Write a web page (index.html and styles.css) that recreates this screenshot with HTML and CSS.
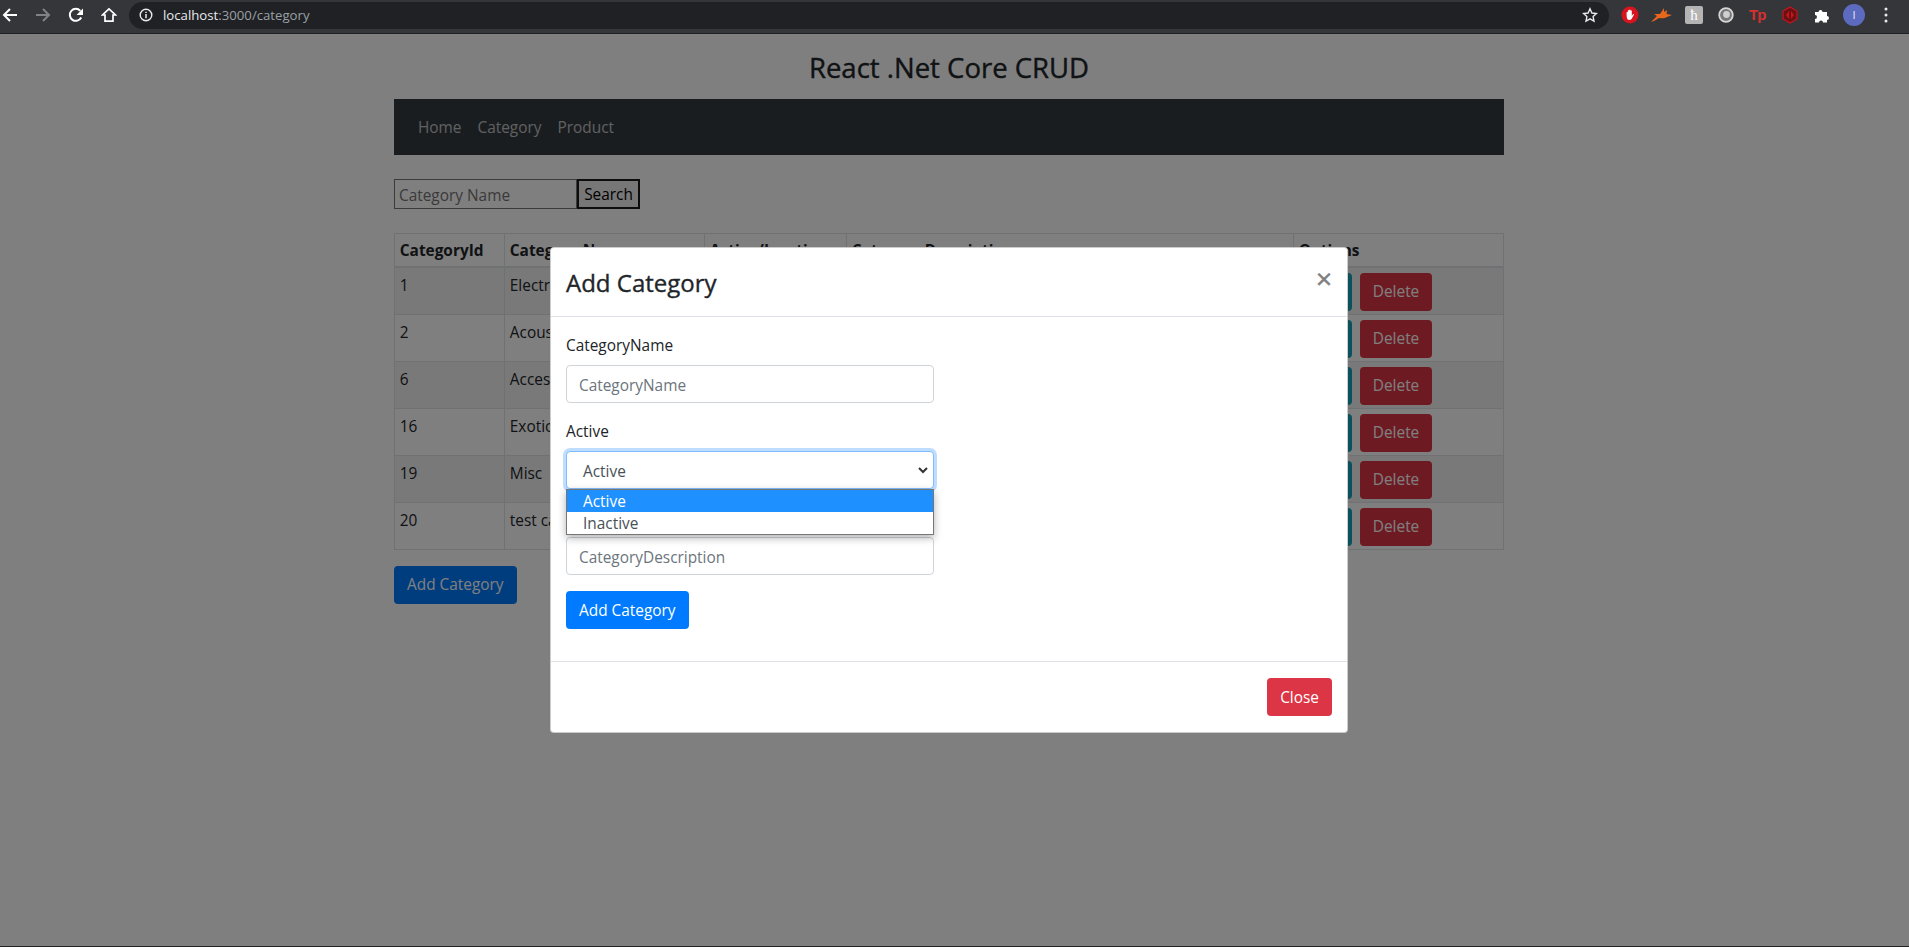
FILE: index.html
```html
<!DOCTYPE html>
<html lang="en">
<head>
    <meta charset="UTF-8">
    <title>React .Net Core CRUD</title>
    <link rel="stylesheet" href="styles.css">
</head>
<body>
    <!-- browser toolbar -->
    <div class="toolbar">
        <svg class="tool-icon" width="16" height="16" viewBox="0 0 16 16"><path d="M15 8H2M8 2L2 8l6 6" fill="none" stroke="#fff" stroke-width="2"/></svg>
        <svg class="tool-icon" width="16" height="16" viewBox="0 0 16 16"><path d="M1 8h13M8 2l6 6-6 6" fill="none" stroke="#808285" stroke-width="2"/></svg>
        <svg class="tool-icon" width="16" height="16" viewBox="0 0 16 16"><path d="M13.2 10.500A6 6 0 1 1 12.300 3.800" fill="none" stroke="#fff" stroke-width="2"/><path d="M15 1.500V8H8.500z" fill="#fff"/></svg>
        <svg class="tool-icon" width="16" height="16" viewBox="0 0 16 16"><path d="M8 1.800L1.500 8H4v6.200h8V8h2.500z" fill="none" stroke="#fff" stroke-width="1.700"/></svg>
        <div class="omnibox">
            <svg class="info" width="14" height="14" viewBox="0 0 14 14"><circle cx="7" cy="7" r="5.800" fill="none" stroke="#e8eaed" stroke-width="1.400"/><path d="M7 6v4.200M7 3.700v1.400" stroke="#e8eaed" stroke-width="1.500"/></svg>
            <span class="host">localhost</span><span class="url-rest">:3000/category</span>
            <svg class="star" width="16" height="16" viewBox="0 0 16 16"><path d="M8 1.800l1.900 4.200 4.600.5-3.400 3.100.9 4.600L8 11.900l-4 2.300.9-4.600L1.500 6.500l4.600-.5z" fill="none" stroke="#e8eaed" stroke-width="1.400"/></svg>
        </div>
        <div class="extensions">
            <svg class="ext" viewBox="0 0 18 18"><circle cx="9" cy="9" r="8.500" fill="#d9141e"/><path d="M5.600 9.500V6.300a.7.700 0 0 1 1.300 0V8.500V4.500a.7.700 0 0 1 1.300 0V8.500V3.900a.7.700 0 0 1 1.300 0V8.500V4.700a.7.700 0 0 1 1.300 0V10l1-1.600c.5-.7 1.400-.2 1 .5l-1.800 3.400c-.5 1-1.300 1.700-2.500 1.700H8.200c-1.500 0-2.600-1.500-2.600-4.500z" fill="#fff"/></svg>
            <svg class="ext ext-deer" viewBox="0 0 22 16"><path d="M0 15L6 9 3 7h6l4-6v4l3-2-.5 4 5.500 1-5 2c-3 2-6 1-8 1l-5 3z" fill="#e8671b"/></svg>
            <div class="ext ext-gray">ћ</div>
            <svg class="ext" viewBox="0 0 18 18"><circle cx="9" cy="9" r="6.800" fill="#777" stroke="#d6d6d6" stroke-width="1.800"/><circle cx="9.500" cy="8.500" r="3.400" fill="#cfcfcf"/></svg>
            <div class="ext ext-tp">Tp</div>
            <svg class="ext" viewBox="0 0 18 18"><path d="M9 1l7 4v8l-7 4-7-4V5z" fill="#6d1014" stroke="#c4161c" stroke-width="1.200"/><path d="M8 5L5 9l3 4zM10 5v8l3-4z" fill="#c4161c"/></svg>
            <svg class="ext" viewBox="0 0 18 18"><path d="M2 6h3.500a2 2 0 1 1 4 0H14v4a2 2 0 1 1 0 4v2.500H10a2 2 0 1 0-4 0H2v-3.500a2 2 0 1 0 0-4z" fill="#fff"/></svg>
            <div class="avatar">I</div>
            <svg class="kebab" width="4" height="16" viewBox="0 0 4 16"><circle cx="2" cy="2" r="1.500" fill="#e8eaed"/><circle cx="2" cy="8" r="1.500" fill="#e8eaed"/><circle cx="2" cy="14" r="1.500" fill="#e8eaed"/></svg>
        </div>
    </div>

    <div class="page">
        <div class="container">
            <h3 class="app-title">React .Net Core CRUD</h3>
            <nav class="navbar">
                <a class="nav-link">Home</a>
                <a class="nav-link">Category</a>
                <a class="nav-link">Product</a>
            </nav>

            <div class="search">
                <input type="text" class="search-input" placeholder="Category Name" />
                <button class="search-btn">Search</button>
            </div>

            <table class="category-table">
                <thead>
                    <tr>
                        <th class="col-id">CategoryId</th>
                        <th class="col-name">Category Name</th>
                        <th class="col-active">Active/Inactive</th>
                        <th class="col-desc">Category Description</th>
                        <th>Options</th>
                    </tr>
                </thead>
                <tbody>
                    <tr>
                        <td>1</td><td>Electric</td><td>Active</td><td>Electric instruments</td>
                        <td class="options"><button class="btn btn-edit">Edit</button><button class="btn btn-danger">Delete</button></td>
                    </tr>
                    <tr>
                        <td>2</td><td>Acoustic</td><td>Active</td><td>Acoustic instruments</td>
                        <td class="options"><button class="btn btn-edit">Edit</button><button class="btn btn-danger">Delete</button></td>
                    </tr>
                    <tr>
                        <td>6</td><td>Accessories</td><td>Active</td><td>Accessories</td>
                        <td class="options"><button class="btn btn-edit">Edit</button><button class="btn btn-danger">Delete</button></td>
                    </tr>
                    <tr>
                        <td>16</td><td>Exotic</td><td>Active</td><td>Exotic instruments</td>
                        <td class="options"><button class="btn btn-edit">Edit</button><button class="btn btn-danger">Delete</button></td>
                    </tr>
                    <tr>
                        <td>19</td><td>Misc</td><td>Active</td><td>Misc</td>
                        <td class="options"><button class="btn btn-edit">Edit</button><button class="btn btn-danger">Delete</button></td>
                    </tr>
                    <tr>
                        <td>20</td><td>test category</td><td>Active</td><td>test</td>
                        <td class="options"><button class="btn btn-edit">Edit</button><button class="btn btn-danger">Delete</button></td>
                    </tr>
                </tbody>
            </table>

            <button class="btn btn-primary">Add Category</button>
        </div>

        <div class="backdrop"></div>

        <div class="modal">
            <div class="modal-header">
                <h4 class="modal-title">Add Category</h4>
                <span class="modal-close">&times;</span>
            </div>
            <div class="modal-body">
                <div class="form-group">
                    <label>CategoryName</label>
                    <input type="text" class="form-control" placeholder="CategoryName" />
                </div>
                <div class="form-group select-group">
                    <label>Active</label>
                    <div class="form-control select-open">
                        <span>Active</span>
                        <svg width="10" height="7" viewBox="0 0 10 7"><path d="M1 1l4 4 4-4" fill="none" stroke="#333" stroke-width="2"/></svg>
                    </div>
                    <ul class="select-menu">
                        <li class="selected">Active</li>
                        <li>Inactive</li>
                    </ul>
                </div>
                <div class="form-group">
                    <label>CategoryDescription</label>
                    <input type="text" class="form-control" placeholder="CategoryDescription" />
                </div>
                <button class="btn btn-primary">Add Category</button>
            </div>
            <div class="modal-footer">
                <button class="btn btn-danger">Close</button>
            </div>
        </div>
    </div>
</body>
</html>
```

FILE: styles.css
```css
* {
    box-sizing: border-box;
}

body {
    margin: 0;
    background-color: #fff;
    color: #212529;
    font-family: 'Open Sans', 'Noto Sans', sans-serif;
    font-size: 15.4px;
    line-height: 24px;
    overflow: hidden;
}

/* browser toolbar */
.toolbar {
    display: flex;
    align-items: center;
    height: 34px;
    padding-bottom: 3px;
    background-color: #35363a;
    border-bottom: 1px solid #1f2023;
}

.tool-icon {
    margin-left: 2px;
    margin-right: 15px;
    flex: none;
}

.omnibox {
    display: flex;
    align-items: center;
    flex: none;
    width: 1480px;
    height: 27px;
    margin-left: -3px;
    padding: 0 10px;
    border-radius: 14px;
    background-color: #202124;
    font-size: 13.2px;
}

.info {
    margin-right: 10px;
}

.host {
    color: #e8eaed;
}

.url-rest {
    color: #9aa0a6;
}

.star {
    margin-left: auto;
    margin-right: 1px;
}

.extensions {
    display: flex;
    align-items: center;
    gap: 14px;
    margin-left: 12px;
}

.ext {
    flex: none;
    width: 18px;
    height: 18px;
}

.ext-deer {
    width: 22px;
    margin: 0 -2px;
}

.ext-gray {
    background-color: #b4b4b4;
    border-radius: 2px;
    color: #fff;
    font-family: 'Liberation Serif', serif;
    font-size: 15px;
    line-height: 18px;
    text-align: center;
}

.ext-tp {
    color: #d8302e;
    font-family: 'Liberation Sans', sans-serif;
    font-size: 15px;
    font-weight: 700;
    letter-spacing: -1px;
    line-height: 18px;
}

.avatar {
    flex: none;
    width: 22px;
    height: 22px;
    margin-left: -2px;
    border-radius: 50%;
    background-color: #5c6bc0;
    color: #e8eaed;
    font-size: 11px;
    line-height: 22px;
    text-align: center;
}

.kebab {
    margin-left: 5px;
}

/* page behind the modal */
.page {
    position: relative;
    height: 913px;
    padding-right: 11px;
    border-bottom: 1px solid #222;
}

.container {
    width: 1110px;
    margin: 0 auto;
}

.app-title {
    margin: 0;
    padding-top: 13px;
    height: 65px;
    font-size: 27.5px;
    font-weight: 400;
    -webkit-text-stroke: 0.4px #212529;
    line-height: 42px;
    text-align: center;
}

.navbar {
    display: flex;
    height: 56px;
    padding: 8px 16px;
    background-color: #343a40;
    align-items: center;
}

.nav-link {
    padding: 2px 8px 0;
    color: rgba(255, 255, 255, 0.7);
}

.search {
    display: flex;
    margin-top: 24px;
    height: 30px;
}

.search-input {
    width: 183px;
    height: 30px;
    padding: 2px 4px 0;
    border: 1px solid #767676;
    font: inherit;
}

.search-btn {
    width: 63px;
    height: 30px;
    padding: 2px 0 0;
    background-color: #efefef;
    border: 2px solid #1a1a1a;
    color: #000;
    font: inherit;
}

.category-table {
    width: 1110px;
    margin-top: 24px;
    margin-bottom: 16px;
    border-collapse: collapse;
    table-layout: fixed;
}

.category-table th,
.category-table td {
    padding: 6px 4.8px 0;
    border: 1px solid #dee2e6;
    text-align: left;
    vertical-align: top;
}

.category-table .options {
    padding: 4.8px 4.8px 3.2px;
}

.category-table th {
    padding: 5px 4.8px 2.8px;
    border-bottom-width: 2px;
    font-weight: 700;
}

.category-table tbody tr:nth-child(odd) {
    background-color: rgba(0, 0, 0, 0.05);
}

.col-id {
    width: 110px;
}

.col-name {
    width: 200px;
}

.col-active {
    width: 142px;
}

.col-desc {
    width: 447px;
}

.btn {
    height: 38px;
    padding: 1px 12px 0;
    border: 1px solid transparent;
    border-radius: 4px;
    color: #fff;
    font: inherit;
    vertical-align: top;
}

.btn-primary {
    background-color: #007bff;
}

.btn-danger {
    background-color: #dc3545;
}

.btn-edit {
    width: 53px;
    margin-right: 8px;
    background-color: #17a2b8;
}

.backdrop {
    position: absolute;
    top: 0;
    left: 0;
    right: 0;
    bottom: 0;
    background-color: rgba(0, 0, 0, 0.5);
}

/* modal */
.modal {
    position: absolute;
    top: 213px;
    left: 550px;
    width: 798px;
    background-color: #fff;
    border-radius: 4px;
    border: 1px solid rgba(0, 0, 0, 0.2);
}

.modal-header {
    display: flex;
    justify-content: space-between;
    height: 69px;
    padding: 17px 15px 15px;
    border-bottom: 1px solid #dee2e6;
}

.modal-title {
    margin: 0;
    font-size: 24px;
    font-weight: 400;
    -webkit-text-stroke: 0.35px #212529;
    line-height: 36px;
}

.modal-close {
    margin-top: -1px;
    color: #7f7f7f;
    font-size: 28px;
    font-weight: 400;
    -webkit-text-stroke: 0.5px #7f7f7f;
    line-height: 28px;
}

.modal-body {
    padding: 16px 15px 32px;
}

.form-group {
    margin-bottom: 16px;
}

.form-group label {
    display: block;
    margin-bottom: 7px;
    padding-top: 1px;
}

.form-control {
    display: block;
    width: 368px;
    height: 38px;
    padding: 7px 12px 5px;
    background-color: #fff;
    border: 1px solid #ced4da;
    border-radius: 4px;
    color: #495057;
    font: inherit;
}

.form-control::placeholder {
    color: #6c757d;
}

.select-group {
    position: relative;
}

.select-open {
    display: flex;
    align-items: center;
    justify-content: space-between;
    padding: 8px 5px 4px 16px;
    border-color: #80bdff;
    box-shadow: 0 0 0 3px rgba(0, 123, 255, 0.25);
}

.select-open svg {
    margin-top: -4px;
}

.select-menu {
    position: absolute;
    top: 70px;
    left: 0;
    width: 368px;
    margin: 0;
    padding: 0;
    list-style: none;
    background-color: #fff;
    border: 1px solid #767676;
    box-shadow: 0 3px 8px rgba(0, 0, 0, 0.3);
    color: #495057;
}

.select-menu li {
    height: 22px;
    padding-left: 16px;
    line-height: 24px;
}

.select-menu .selected {
    background-color: #1e90ff;
    color: #fff;
}

.modal-footer {
    display: flex;
    justify-content: flex-end;
    padding: 16px 15px;
    border-top: 1px solid #dee2e6;
}
```
